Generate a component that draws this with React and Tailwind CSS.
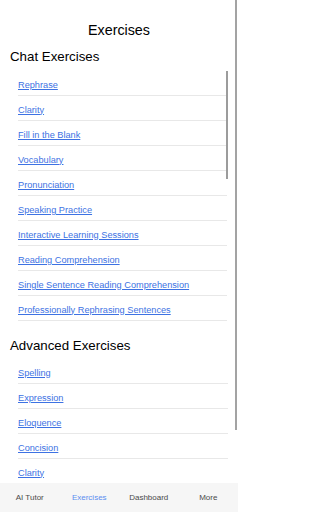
import React from "react";

const chatExercises = [
  "Rephrase",
  "Clarity",
  "Fill in the Blank",
  "Vocabulary",
  "Pronunciation",
  "Speaking Practice",
  "Interactive Learning Sessions",
  "Reading Comprehension",
  "Single Sentence Reading Comprehension",
  "Professionally Rephrasing Sentences",
];

const advancedExercises = ["Spelling", "Expression", "Eloquence", "Concision", "Clarity"];

const tabs = ["AI Tutor", "Exercises", "Dashboard", "More"];

const ExerciseRow = ({ label }) => (
  <li className="h-[25px] flex items-center pt-[5px] border-b border-[#e8e8e8]">
    <a href="#" className="text-[9.2px] text-[#3d72e3] underline underline-offset-1">
      {label}
    </a>
  </li>
);

const App = () => {
  return (
    <div
      className="relative h-[512px] w-[238px] overflow-hidden bg-white text-black"
      style={{ fontFamily: '"Liberation Sans", Arial, sans-serif' }}
    >
      <div className="flex flex-col pt-[20px]">
        <h1 className="h-[20px] leading-[20px] text-center text-[14.3px]">Exercises</h1>

        <h2 className="mt-[8px] h-[18px] leading-[18px] pl-[10px] text-[13.3px]">Chat Exercises</h2>
        <div className="relative mt-[5px]">
          <ul className="ml-[18px] mr-[11px]">
            {chatExercises.map((item) => (
              <ExerciseRow key={item} label={item} />
            ))}
          </ul>
          {/* inner list scroll thumb */}
          <div className="absolute right-[10.5px] top-0 h-[108px] w-[2px] bg-[#9c9c9c]" />
        </div>

        <h2 className="mt-[16px] h-[18px] leading-[18px] pl-[10px] text-[13.3px]">Advanced Exercises</h2>
        <ul className="mt-[4px] ml-[18px] mr-[10px]">
          {advancedExercises.map((item, i) => (
            <ExerciseRow key={item + i} label={item} />
          ))}
        </ul>
      </div>

      {/* page scroll thumb */}
      <div className="absolute right-[1.5px] top-0 h-[430px] w-[2px] bg-[#a3a3a3]" />

      <nav className="absolute bottom-0 left-0 right-0 h-[29px] bg-[#f6f6f6] grid grid-cols-4 items-center">
        {tabs.map((tab) => (
          <span
            key={tab}
            className={`text-center text-[8px] ${tab === "Exercises" ? "text-[#5b8df0]" : "text-[#4a4a4a]"}`}
          >
            {tab}
          </span>
        ))}
      </nav>
    </div>
  );
};

export default App;
